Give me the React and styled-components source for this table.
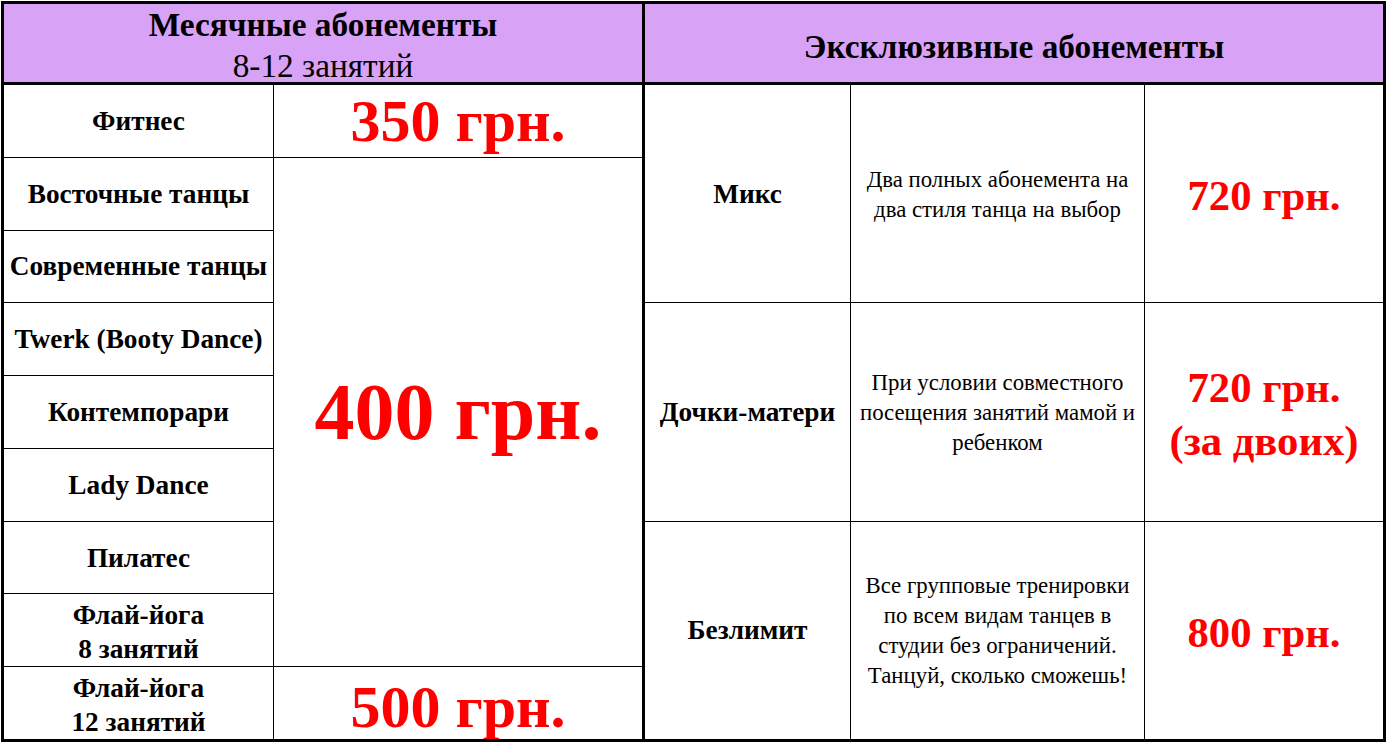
import React from "react";
import styled, { createGlobalStyle } from "styled-components";

const Global = createGlobalStyle`
  html, body { margin: 0; padding: 0; background: #fff; }
  body { font-family: "Liberation Serif", "Times New Roman", serif; color: #000; }
`;

const Frame = styled.div`
  margin: 1px 0 0 1px;
  width: 1385px;
  height: 741px;
  box-sizing: border-box;
  border: 3px solid #000;
  display: flex;
  overflow: hidden;
`;

const Panel = styled.section`
  display: flex;
  flex-direction: column;
  width: ${(p) => p.$width}px;
  box-sizing: border-box;
  border-right: ${(p) => (p.$divider ? "3px solid #000" : "none")};
`;

const Head = styled.header`
  height: 81px;
  box-sizing: border-box;
  border-bottom: 3px solid #000;
  background: #d8a2f7;
  display: flex;
  flex-direction: column;
  align-items: center;
  justify-content: center;
  text-align: center;
  font-size: 33.3px;
  line-height: 41px;
  padding-top: ${(p) => p.$pt || 0}px;
`;

const HeadTitle = styled.div`
  font-weight: bold;
`;

const HeadSub = styled.div`
  font-weight: normal;
`;

const Body = styled.div`
  flex: 1;
  min-height: 0;
  display: grid;
  grid-template-columns: ${(p) => p.$cols};
  grid-template-rows: repeat(${(p) => p.$rows}, minmax(0, 1fr));
  gap: 1px;
  background: #000;
`;

const Cell = styled.div`
  background: #fff;
  display: flex;
  flex-direction: column;
  align-items: center;
  justify-content: center;
  text-align: center;
  grid-row: ${(p) => p.$row || "auto"};
  grid-column: ${(p) => p.$col || "auto"};
  min-width: 0;
  min-height: 0;
  overflow: hidden;
`;

const Label = styled.div`
  font-weight: bold;
  font-size: 27.3px;
  line-height: 34px;
  white-space: nowrap;
  transform: translateY(${(p) => p.$dy || 0}px);
`;

const Desc = styled.div`
  font-size: 22.8px;
  line-height: 30px;
  white-space: nowrap;
  transform: translateY(${(p) => p.$dy || 0}px);
`;

const Price = styled.div`
  color: #ff0000;
  font-weight: bold;
  font-size: ${(p) => p.$size}px;
  line-height: ${(p) => p.$lh}px;
  white-space: nowrap;
  transform: translateY(${(p) => p.$dy || 0}px);
`;

const leftRows = [
  "Восточные танцы",
  "Современные танцы",
  "Twerk (Booty Dance)",
  "Контемпорари",
  "Lady Dance",
  "Пилатес",
];

const exclusive = [
  {
    name: "Микс",
    desc: ["Два полных абонемента на", "два стиля танца на выбор"],
    price: ["720 грн."],
  },
  {
    name: "Дочки-матери",
    desc: ["При условии совместного", "посещения занятий мамой и", "ребенком"],
    price: ["720 грн.", "(за двоих)"],
  },
  {
    name: "Безлимит",
    desc: [
      "Все групповые тренировки",
      "по всем видам танцев в",
      "студии без ограничений.",
      "Танцуй, сколько сможешь!",
    ],
    price: ["800 грн."],
  },
];

export default function App() {
  return (
    <>
      <Global />
      <Frame>
        <Panel $width={641} $divider>
          <Head $pt={3}>
            <HeadTitle>Месячные абонементы</HeadTitle>
            <HeadSub>8-12 занятий</HeadSub>
          </Head>
          <Body $cols="269px 368px" $rows={9}>
            <Cell $row="1" $col="1">
              <Label>Фитнес</Label>
            </Cell>
            <Cell $row="1" $col="2">
              <Price $size={60} $lh={60}>350 грн.</Price>
            </Cell>
            {leftRows.map((t, i) => (
              <Cell key={t} $row={`${i + 2}`} $col="1">
                <Label>{t}</Label>
              </Cell>
            ))}
            <Cell $row="8" $col="1">
              <Label $dy={2}>Флай-йога</Label>
              <Label $dy={2}>8 занятий</Label>
            </Cell>
            <Cell $row="2 / 9" $col="2">
              <Price $size={80} $lh={80}>400 грн.</Price>
            </Cell>
            <Cell $row="9" $col="1">
              <Label $dy={2}>Флай-йога</Label>
              <Label $dy={2}>12 занятий</Label>
            </Cell>
            <Cell $row="9" $col="2">
              <Price $size={60} $lh={60} $dy={4}>500 грн.</Price>
            </Cell>
          </Body>
        </Panel>
        <Panel $width={738}>
          <Head $pt={6}>
            <HeadTitle>Эксклюзивные абонементы</HeadTitle>
          </Head>
          <Body $cols="205px 293px 238px" $rows={3}>
            {exclusive.map((r) => (
              <React.Fragment key={r.name}>
                <Cell>
                  <Label>{r.name}</Label>
                </Cell>
                <Cell>
                  <Desc $dy={1}>
                    {r.desc.map((d) => (
                      <div key={d}>{d}</div>
                    ))}
                  </Desc>
                </Cell>
                <Cell>
                  {r.price.map((p) => (
                    <Price key={p} $size={42.67} $lh={53} $dy={2}>
                      {p}
                    </Price>
                  ))}
                </Cell>
              </React.Fragment>
            ))}
          </Body>
        </Panel>
      </Frame>
    </>
  );
}
